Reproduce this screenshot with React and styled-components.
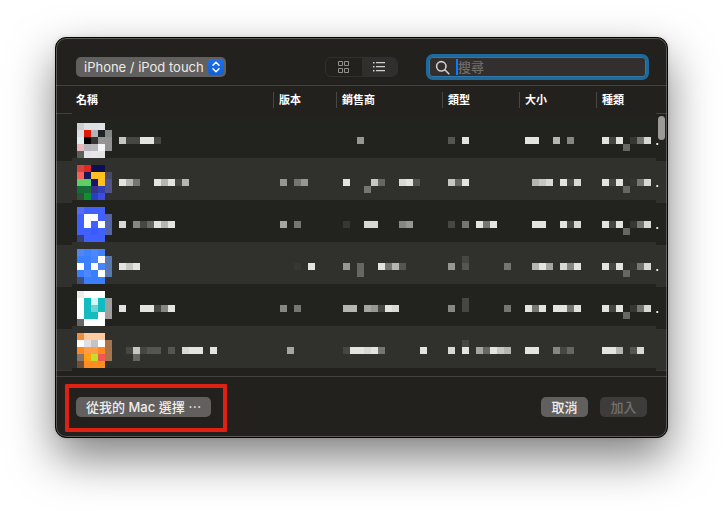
import React from "react";
import styled, { createGlobalStyle } from "styled-components";

const GlobalStyle = createGlobalStyle`
  * { box-sizing: border-box; }
  body {
    margin: 0;
    background: #fff;
    color: #fff;
    font-family: Inter, "Noto Sans CJK TC", sans-serif;
    font-size: 13px;
  }
  button, input, select { font: inherit; margin: 0; }
`;

const Page = styled.main`
  padding: 37px 55px 73px;
`;

const Dialog = styled.section`
  position: relative;
  border: 1px solid #050505;
  border-radius: 11px;
  background: #22211e;
  box-shadow: 0 20px 46px rgba(0, 0, 0, 0.5), 0 0 4px rgba(0, 0, 0, 0.12);
  overflow: hidden;

  &::after {
    content: "";
    position: absolute;
    inset: 0;
    border: 1px solid rgba(255, 255, 255, 0.26);
    border-radius: 10px;
    pointer-events: none;
  }
`;

const Toolbar = styled.header`
  display: flex;
  align-items: center;
  height: 48px;
  padding: 11px 18px 0 20px;
  border-bottom: 1px solid #43423f;
`;

const PopUp = styled.label`
  display: flex;
  align-items: center;
  width: 150px;
  height: 20px;
  padding: 0 2px 0 8px;
  border-radius: 5px;
  background: #62605e;
`;

const PopUpSelect = styled.select`
  flex: 1;
  min-width: 0;
  height: 20px;
  padding: 0;
  border: 0;
  appearance: none;
  background: transparent;
  color: #eceae8;
  outline: none;
`;

const Chip = styled.span`
  display: grid;
  place-items: center;
  width: 16px;
  height: 16px;
  border-radius: 4px;
  background: linear-gradient(#1f70ec, #135fd4);
`;

const Segments = styled.div`
  display: flex;
  width: 73px;
  height: 20px;
  margin: 0 28px 0 auto;
  border: 1px solid #32302e;
  border-radius: 6px;
  overflow: hidden;
`;

const Segment = styled.button`
  display: grid;
  place-items: center;
  flex: 1;
  padding: 0;
  border: 0;
  background: ${(p) => (p.$active ? "#312f2e" : "transparent")};
  color: ${(p) => (p.$active ? "#d2d0ce" : "#91908d")};
`;

const Search = styled.label`
  display: flex;
  align-items: center;
  width: 223px;
  height: 26px;
  padding: 0 6px;
  border: 3px solid #1f6a9c;
  border-radius: 7px;
  background: #322f2e;
  box-shadow: inset 0 0 0 1px #3478a8;
`;

const Caret = styled.span`
  width: 2px;
  height: 16px;
  margin-left: 6px;
  background: #0a7aff;
`;

const SearchInput = styled.input`
  flex: 1;
  min-width: 0;
  height: 20px;
  padding: 0;
  border: 0;
  background: transparent;
  color: #fff;
  outline: none;
  &::placeholder { color: #6f6c6a; opacity: 1; font-weight: 500; }
`;

const ListArea = styled.div`
  position: relative;
  padding-bottom: 5px;
  border-bottom: 1px solid #43423f;
`;

const Table = styled.table`
  width: 100%;
  border-collapse: collapse;
  border-spacing: 0;
  table-layout: fixed;
`;

const Col = styled.col`
  width: ${(p) => (p.$w ? `${p.$w}px` : "auto")};
`;

const HeadCell = styled.th`
  height: 30px;
  padding: 6px 0 8px;
  text-align: left;
  font-size: 11px;
  font-weight: 700;
  line-height: 16px;
`;

const HeadLabel = styled.div`
  height: 16px;
  padding-left: ${(p) => (p.$first ? 4 : 5)}px;
  border-left: ${(p) => (p.$first ? "0" : "1px solid #484744")};
`;

const HeadEdge = styled.td`
  padding: 0;
  vertical-align: top;
`;

const EdgeRule = styled.div`
  height: 28px;
  border-bottom: 1px solid #42413e;
`;

const DARK = "#22231f";
const LIGHT = "#30312d";

const Row = styled.tr`
  height: 42px;
  background: ${(p) => (p.$alt ? LIGHT : DARK)};
`;

const Cell = styled.td`
  padding: 7px 0 0 ${(p) => p.$pad}px;
  vertical-align: top;
  line-height: 0;
`;

const EdgeCell = styled.td`
  padding: 0;
  vertical-align: top;
  line-height: 0;
  background: linear-gradient(
    ${(p) => (p.$alt || p.$top ? DARK : LIGHT)} 3px,
    ${(p) => (p.$alt ? LIGHT : DARK)} 3px
  );
`;

const EdgeEnd = styled.div`
  display: flex;
  justify-content: space-between;
  height: 3px;
`;

const EdgePiece = styled.span`
  width: ${(p) => p.$w}px;
  background: ${LIGHT};
  border-bottom: 1px solid #393a36;
`;

const Thumb = styled.div`
  position: absolute;
  top: 30px;
  right: 2px;
  width: 7px;
  height: 24px;
  border-radius: 4px;
  background: #9b9a98;
`;

const Footer = styled.footer`
  display: flex;
  align-items: center;
  gap: 12px;
  height: 60px;
  padding: 0 20px;
`;

const Marked = styled.div`
  position: relative;
  margin-right: auto;

  &::after {
    content: "";
    position: absolute;
    inset: -13px -16px -15px -11px;
    border: 4px solid #df2113;
    border-radius: 1px;
    pointer-events: none;
  }
`;

const Button = styled.button`
  display: block;
  min-width: 47px;
  height: 20px;
  padding: 0 10px;
  border: 0;
  border-radius: 5px;
  background: #62605e;
  color: #f0eeec;
  font-weight: 500;
  line-height: 20px;
  white-space: nowrap;
  &:disabled { background: #3e3c3a; color: #71706d; }
`;

const UNIT = 7;

const GREYS = {
  3: "#363733", 4: "#464743", 5: "#555652", 6: "#666763", 7: "#757672",
  8: "#868783", 9: "#969792", a: "#a5a5a2", b: "#b5b5b2", c: "#c6c6c3",
  d: "#d8d8d5", e: "#e3e4e0",
};

const art = (...lines) => lines.map((l) => l.split(" ").map((c) => (c === "." ? null : `#${c}`)));

const APPS = [
  {
    icon: art(
      "cfcfcf e0e0e2 e0e0e4 e2e2e6",
      "dedee2 dc1c08 b0b4b8 202326 868686",
      "e0eef0 000 383434 949494 929292",
      "e8b8bc b4b4b8 b8b8bc f5f5f5 929292",
      "5c5e58 e4e4e8 e6e6ea e4e4e8"
    ),
    name: ["c44ee4"], version: [""], seller: ["..9"], genre: ["5.e"], size: ["ee..b.8"], kind: ["e4e.37d", "...6"], dot: true,
  },
  {
    icon: art(
      "d44440 e02820 0c1052 0c1052",
      "f86058 141858 ffc020 ffc020 484a68",
      "5ccf66 5ccf66 1c1468 ffc020 50548a",
      "146c38 186c3c 3c3088 3040b0 50548a",
      "305038 0c9030 2442c8 3c4ce0"
    ),
    name: ["eb7..ebe4b"], version: ["9.79"], seller: ["e...c6..de5", "...7"], genre: ["c6e"], size: [".bcd.e4d"], kind: ["e4e.37d", "...6"], dot: true,
  },
  {
    icon: art(
      "586cf0 4060ff 4060ff 4060ff",
      "4060ff fff fff 4060ff 5464a8",
      "4060ff fff 4060ff fff 5464a8",
      "4060ff 4060ff 3a5cff 4060ff 5464a8",
      "384070 4060ff 4060ff 4060ff"
    ),
    name: ["d.846ebe"], version: ["a.7"], seller: ["3..dd...89"], genre: ["4.7.e7e"], size: [".ee..e4d"], kind: ["e4e.37d", "...6"], dot: true,
  },
  {
    icon: art(
      "5088f0 4082fa 4c88fa 4082fa",
      "3a7fff 3a7fff 4685ff fff 5878b0",
      "fff 3a7fff fff 4685ff 5878b0",
      "3a7fff 4c88ff 3a7fff fff 5878b0",
      "405078 3a7fff 3a7fff 3a7fff"
    ),
    name: ["ece"], version: ["..3.e"], seller: ["9.6..e7b5", "..6"], genre: ["9.5.....7", "", "..4"], size: [".bea.d8e"], kind: ["e4e.37d", "...6"], dot: true,
  },
  {
    icon: art(
      "ececec fff fff fff",
      "fff 10bcc0 d8f4f4 10bcc0 a0a0a0",
      "fff 14bcc0 68d4d4 10bcc0 a0a0a0",
      "fff 14bcc0 14bcc0 fff a0a0a0",
      "686868 fff fff fff"
    ),
    name: ["e..ee48e"], version: ["8.7"], seller: ["bb.a94ed"], genre: ["8.4.....7", "", "..4"], size: ["e7e.ee7e"], kind: ["e4e.37d", "...6"], dot: true,
  },
  {
    icon: art(
      "ec9040 ffcca0 ffcca0 ffcca0",
      "fff e0e0e4 c4c4c8 fff a8744c",
      "ff8820 ff9c48 ff9c48 ff8820 a8744c",
      "887468 ffa010 c0e030 f05850 a8744c",
      "705038 ff8c20 ff8c20 ff8c20"
    ),
    name: [".4c455.5.dee.e", "..6"], version: [".a"], seller: ["4eede7.....e"], genre: ["d.e.a6ecb", "", "..4"], size: ["ee..846"], kind: ["eeb.5d"],
  },
];

const COLUMNS = [
  { key: "name", label: "名稱", width: 0, pad: 5 },
  { key: "version", label: "版本", width: 63, pad: 7 },
  { key: "seller", label: "銷售商", width: 106, pad: 7 },
  { key: "genre", label: "類型", width: 77, pad: 6 },
  { key: "size", label: "大小", width: 77, pad: 6 },
  { key: "kind", label: "種類", width: 60, pad: 6 },
];

function Mosaic({ icon, lines }) {
  const [main, below = "", above = ""] = lines;
  const shift = icon ? 6 : 0;
  const cols = Math.max(shift + main.length, 1);
  const tiles = [];
  if (icon) {
    icon.forEach((r, y) => r.forEach((c, x) => c && tiles.push([x, y, c])));
  }
  [[above, 1], [main, 2], [below, 3]].forEach(([line, y]) =>
    [...line].forEach((ch, x) => ch !== "." && tiles.push([x + shift, y, GREYS[ch]]))
  );
  return (
    <svg width={cols * UNIT} height={5 * UNIT} shapeRendering="crispEdges" aria-hidden="true">
      {tiles.map(([x, y, c], i) => (
        <rect key={i} x={x * UNIT} y={y * UNIT} width={UNIT} height={UNIT} fill={c} />
      ))}
    </svg>
  );
}

export default function App() {
  return (
    <>
      <GlobalStyle />
      <Page>
        <Dialog role="dialog" aria-label="iPhone / iPod touch">
          <Toolbar>
            <PopUp>
              <PopUpSelect aria-label="iPhone / iPod touch">
                <option>iPhone / iPod touch</option>
              </PopUpSelect>
              <Chip>
                <svg width="8" height="12" viewBox="0 0 8 12" fill="none" stroke="#fff" strokeWidth="1.5" strokeLinecap="round" strokeLinejoin="round">
                  <path d="M1 4.2 4 1.3 7 4.2M1 7.8 4 10.7 7 7.8" />
                </svg>
              </Chip>
            </PopUp>
            <Segments>
              <Segment type="button" aria-label="格狀">
                <svg width="12" height="12" viewBox="0 0 12 12" fill="none" stroke="currentColor">
                  <path d="M.5.5h4v4h-4zM6.5.5h4v4h-4zM.5 7.5h4v4h-4zM6.5 7.5h4v4h-4z" />
                </svg>
              </Segment>
              <Segment type="button" aria-label="列表" $active>
                <svg width="12" height="10" viewBox="0 0 12 10" fill="currentColor">
                  <path d="M0 0h1.5v1.5H0zM0 4h1.5v1.5H0zM0 8h1.5v1.5H0zM3 0h9v1.2H3zM3 4h9v1.2H3zM3 8h9v1.2H3z" />
                </svg>
              </Segment>
            </Segments>
            <Search>
              <svg width="15" height="15" viewBox="0 0 15 15" fill="none" stroke="#d0cecc" strokeWidth="1.6" strokeLinecap="round">
                <circle cx="6.3" cy="6.3" r="4.7" />
                <path d="m9.8 9.8 4 4" />
              </svg>
              <Caret />
              <SearchInput type="text" placeholder="搜尋" aria-label="搜尋" />
            </Search>
          </Toolbar>

          <ListArea>
            <Table>
              <colgroup>
                <Col $w={16} />
                {COLUMNS.map((c) => <Col key={c.key} $w={c.width} />)}
                <Col $w={11} />
              </colgroup>
              <thead>
                <tr>
                  <HeadEdge><EdgeRule /></HeadEdge>
                  {COLUMNS.map((c, i) => (
                    <HeadCell key={c.key} scope="col">
                      <HeadLabel $first={i === 0}>{c.label}</HeadLabel>
                    </HeadCell>
                  ))}
                  <HeadEdge><EdgeRule /></HeadEdge>
                </tr>
              </thead>
              <tbody>
                {APPS.map((app, i) => {
                  const alt = i % 2 === 1;
                  return (
                    <Row key={i} $alt={alt}>
                      <EdgeCell $alt={alt} $top={i === 0} />
                      {COLUMNS.map((c) => (
                        <Cell key={c.key} $pad={c.pad}>
                          <Mosaic icon={c.key === "name" ? app.icon : null} lines={app[c.key]} />
                        </Cell>
                      ))}
                      <EdgeCell $alt={alt} $top={i === 0}>
                        {app.dot && (
                          <svg width="4" height="32" aria-hidden="true">
                            <rect x="0.3" y="27" width="1.9" height="2" fill="#e3e4e0" />
                          </svg>
                        )}
                      </EdgeCell>
                    </Row>
                  );
                })}
              </tbody>
            </Table>
            <EdgeEnd>
              <EdgePiece $w={16} />
              <EdgePiece $w={11} />
            </EdgeEnd>
            <Thumb />
          </ListArea>

          <Footer>
            <Marked>
              <Button type="button">從我的 Mac 選擇 ⋯</Button>
            </Marked>
            <Button type="button">取消</Button>
            <Button type="button" disabled>加入</Button>
          </Footer>
        </Dialog>
      </Page>
    </>
  );
}
